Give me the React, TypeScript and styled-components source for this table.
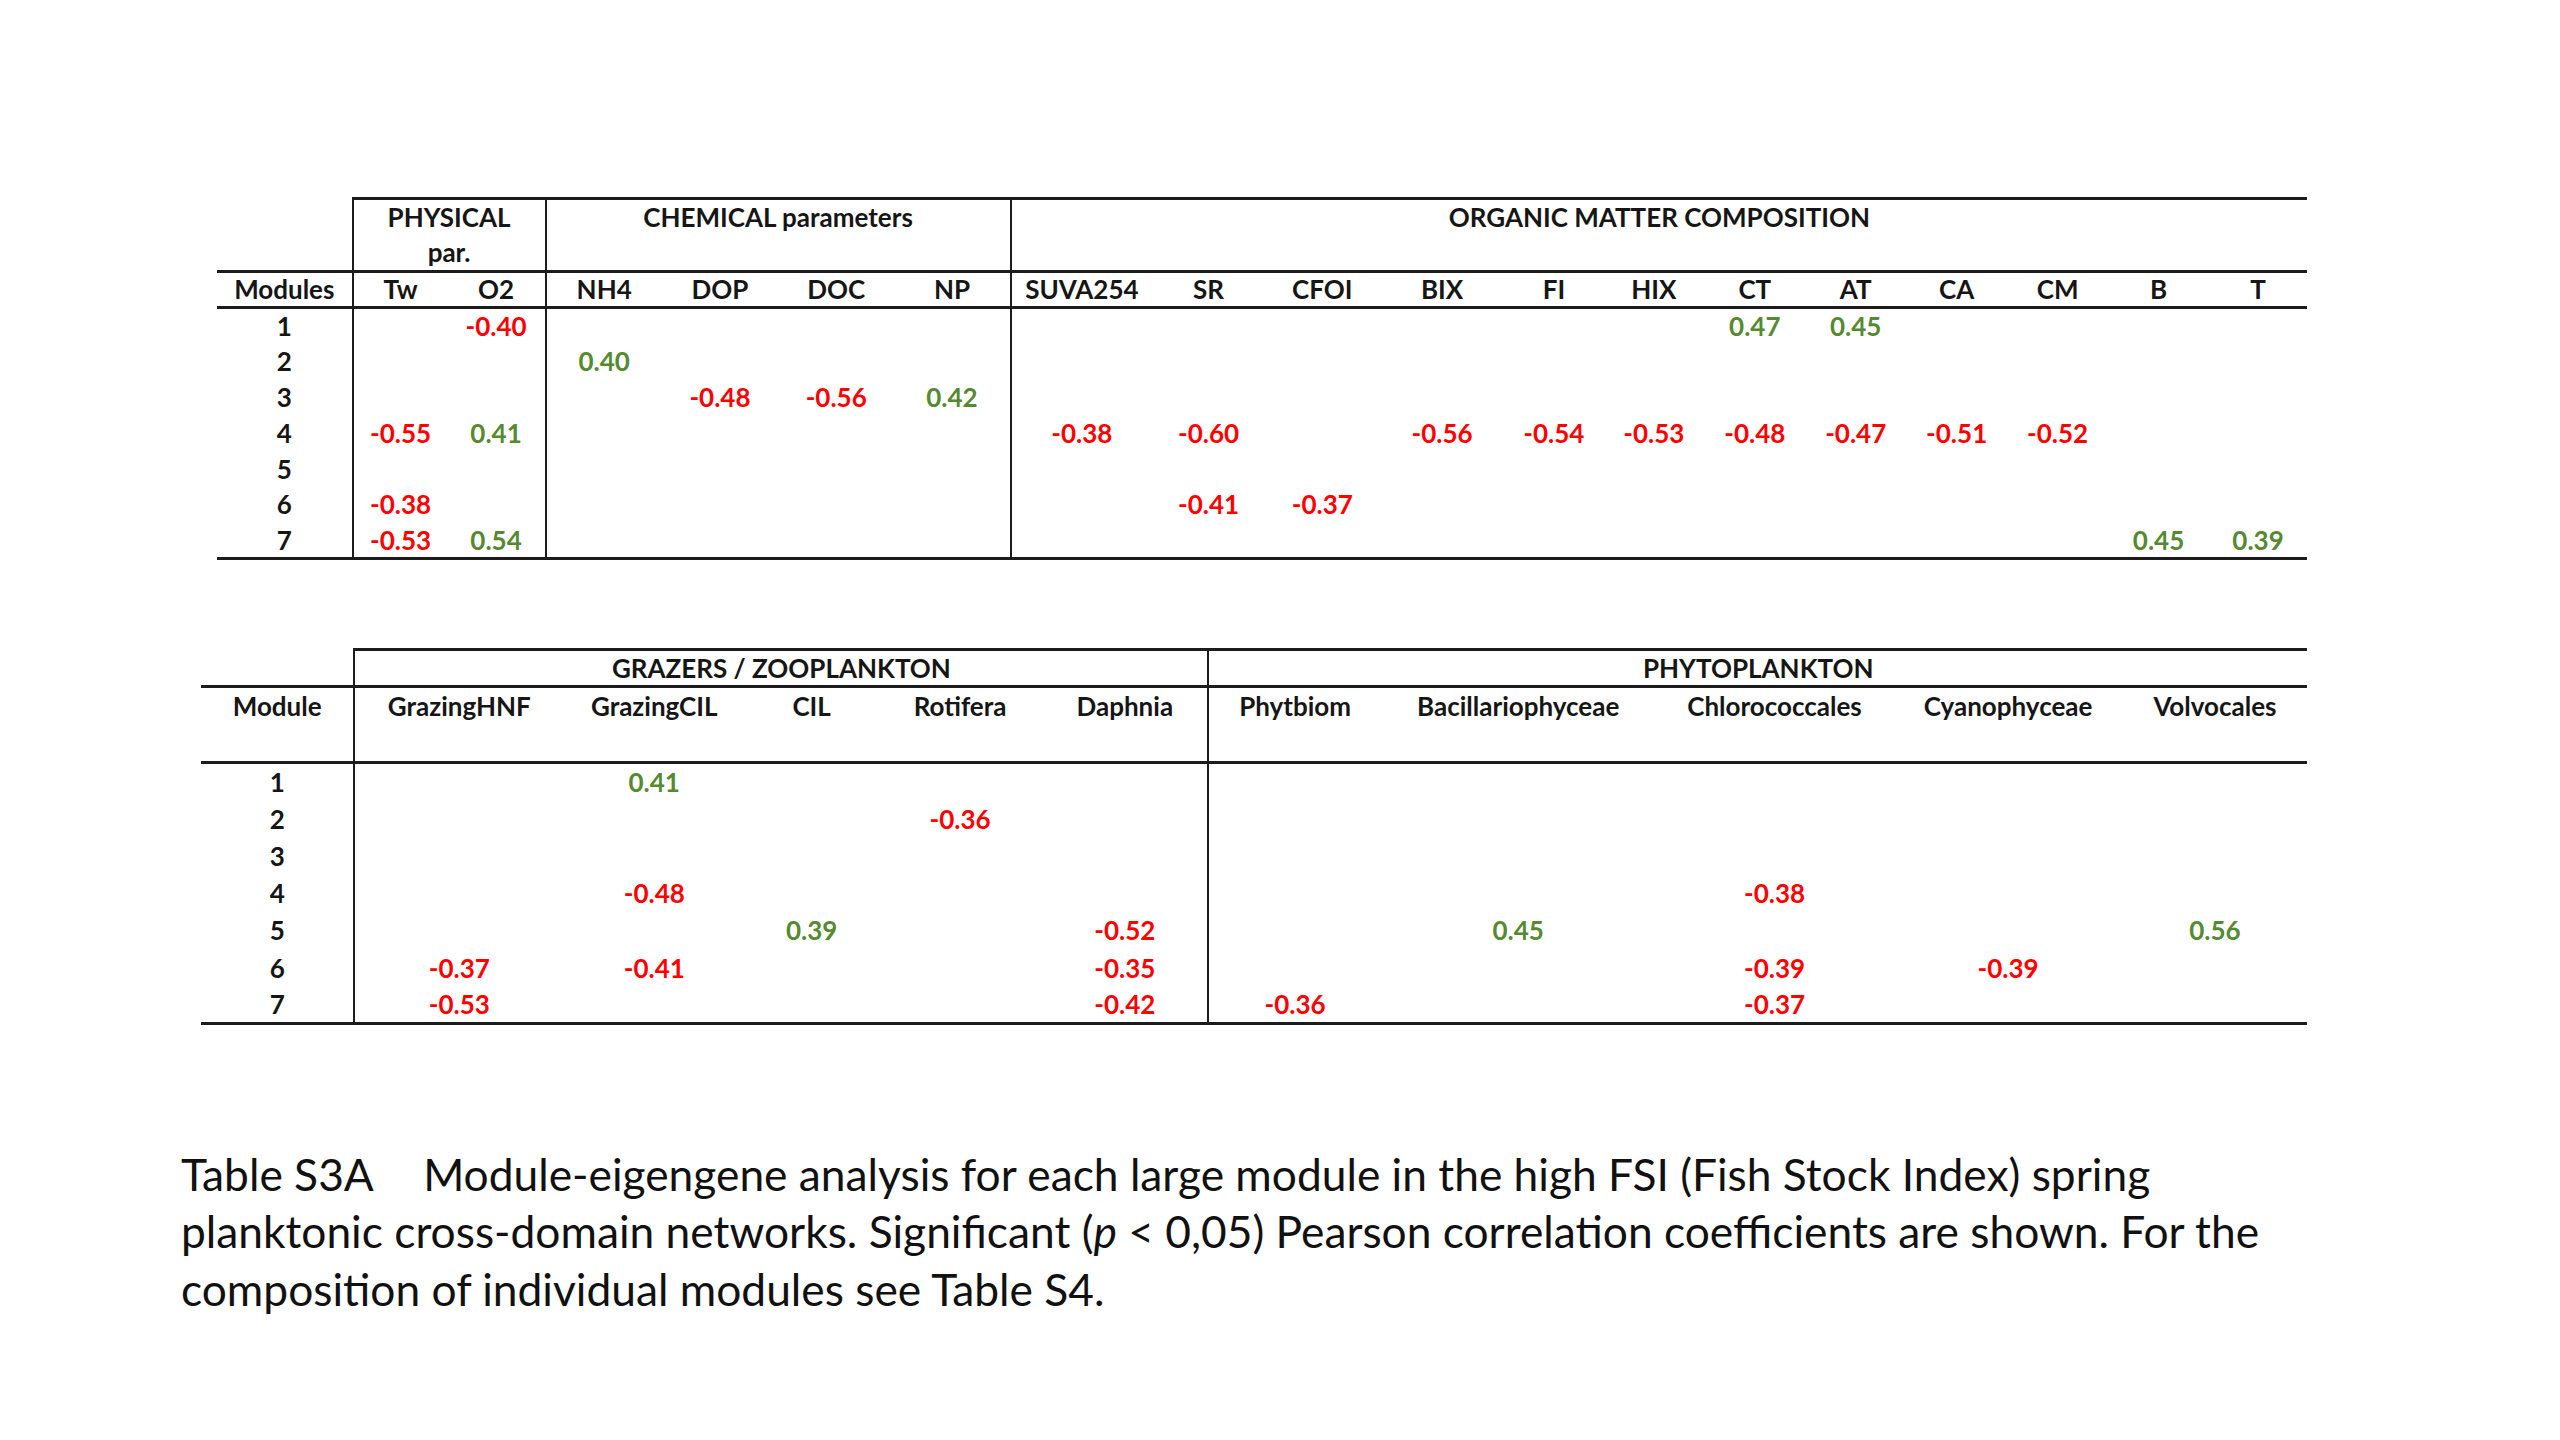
import React from "react";
import styled, { createGlobalStyle } from "styled-components";

const Global = createGlobalStyle`
  html, body { margin: 0; padding: 0; background: #ffffff; }
  body { font-family: Lato, "Open Sans", sans-serif; color: #161616; }
`;

const Page = styled.div`
  width: 2560px;
  height: 1440px;
  box-sizing: border-box;
  padding-top: 197px;
  display: flex;
  flex-direction: column;
  align-items: flex-start;
  overflow: hidden;
  background: #ffffff;
`;

const Table = styled.table<{ $left: number; $top?: number; $width: number }>`
  margin-left: ${(p) => p.$left}px;
  margin-top: ${(p) => p.$top ?? 0}px;
  width: ${(p) => p.$width}px;
  border-collapse: collapse;
  table-layout: fixed;
  font-family: Lato, "Open Sans", sans-serif;
  font-weight: 700;
  font-size: 26px;
  color: #161616;
`;

const Col = styled.col<{ $w: number }>`
  width: ${(p) => p.$w}px;
`;

const Row = styled.tr<{ $h: number; $bottom?: boolean }>`
  height: ${(p) => p.$h}px;
  & > td {
    border-bottom: ${(p) => (p.$bottom ? "3px solid #1c1c1c" : "0")};
  }
`;

const Cell = styled.td<{
  $vl?: boolean;
  $top?: boolean;
  $color?: string;
  $valign?: string;
  $lh?: number;
}>`
  padding: 0;
  text-align: center;
  white-space: nowrap;
  vertical-align: ${(p) => p.$valign ?? "middle"};
  line-height: ${(p) => p.$lh ?? 28}px;
  border-left: ${(p) => (p.$vl ? "2px solid #1c1c1c" : "0")};
  border-top: ${(p) => (p.$top ? "3px solid #1c1c1c" : "0")};
  color: ${(p) => p.$color ?? "#161616"};
`;

const Caption = styled.p<{ $top: number }>`
  margin: ${(p) => p.$top}px 0 0 181px;
  font-family: Lato, "Open Sans", sans-serif;
  font-weight: 400;
  font-size: 44.3px;
  line-height: 57.2px;
  color: #111111;
  white-space: nowrap;
`;

const Tab = styled.span`
  display: inline-block;
  width: 38px;
`;

const RED = "#ff0000";
const GREEN = "#558a30";

const valueColor = (v: string) => (v.startsWith("-") ? RED : GREEN);

type ColDef = { h: string; w: number; vl?: boolean };

const t1First = 137;
const t1Cols: ColDef[] = [
  { h: "Tw", w: 96, vl: true },
  { h: "O2", w: 99 },
  { h: "NH4", w: 117.5, vl: true },
  { h: "DOP", w: 117.5 },
  { h: "DOC", w: 117.5 },
  { h: "NP", w: 117.5 },
  { h: "SUVA254", w: 143, vl: true },
  { h: "SR", w: 114 },
  { h: "CFOI", w: 116 },
  { h: "BIX", w: 126 },
  { h: "FI", w: 100 },
  { h: "HIX", w: 102 },
  { h: "CT", w: 102 },
  { h: "AT", w: 102 },
  { h: "CA", w: 102 },
  { h: "CM", w: 102 },
  { h: "B", w: 102 },
  { h: "T", w: 99 },
];

const t1Rows: Record<string, string>[] = [
  { O2: "-0.40", CT: "0.47", AT: "0.45" },
  { NH4: "0.40" },
  { DOP: "-0.48", DOC: "-0.56", NP: "0.42" },
  {
    Tw: "-0.55",
    O2: "0.41",
    SUVA254: "-0.38",
    SR: "-0.60",
    BIX: "-0.56",
    FI: "-0.54",
    HIX: "-0.53",
    CT: "-0.48",
    AT: "-0.47",
    CA: "-0.51",
    CM: "-0.52",
  },
  {},
  { Tw: "-0.38", SR: "-0.41", CFOI: "-0.37" },
  { Tw: "-0.53", O2: "0.54", B: "0.45", T: "0.39" },
];

const t2First = 155;
const t2Cols: ColDef[] = [
  { h: "GrazingHNF", w: 211, vl: true },
  { h: "GrazingCIL", w: 184 },
  { h: "CIL", w: 134 },
  { h: "Rotifera", w: 166 },
  { h: "Daphnia", w: 168 },
  { h: "Phytbiom", w: 174, vl: true },
  { h: "Bacillariophyceae", w: 278 },
  { h: "Chlorococcales", w: 240 },
  { h: "Cyanophyceae", w: 232 },
  { h: "Volvocales", w: 186 },
];

const t2Rows: Record<string, string>[] = [
  { GrazingCIL: "0.41" },
  { Rotifera: "-0.36" },
  {},
  { GrazingCIL: "-0.48", Chlorococcales: "-0.38" },
  { CIL: "0.39", Daphnia: "-0.52", Bacillariophyceae: "0.45", Volvocales: "0.56" },
  {
    GrazingHNF: "-0.37",
    GrazingCIL: "-0.41",
    Daphnia: "-0.35",
    Chlorococcales: "-0.39",
    Cyanophyceae: "-0.39",
  },
  { GrazingHNF: "-0.53", Daphnia: "-0.42", Phytbiom: "-0.36", Chlorococcales: "-0.37" },
];

const T1_WIDTH = 2090;
const T2_WIDTH = 2106;

const scaleOf = (first: number, cols: ColDef[], total: number) =>
  total / (first + cols.reduce((s, c) => s + c.w, 0));

function ColGroup({ first, cols, total }: { first: number; cols: ColDef[]; total: number }) {
  const s = scaleOf(first, cols, total);
  return (
    <colgroup>
      <Col $w={first * s} />
      {cols.map((c) => (
        <Col key={c.h} $w={c.w * s} />
      ))}
    </colgroup>
  );
}

function DataRows({
  rows,
  cols,
  h,
}: {
  rows: Record<string, string>[];
  cols: ColDef[];
  h: number;
}) {
  return (
    <>
      {rows.map((r, i) => (
        <Row key={i} $h={h} $bottom={i === rows.length - 1}>
          <Cell>{i + 1}</Cell>
          {cols.map((c) => {
            const v = r[c.h] ?? "";
            return (
              <Cell key={c.h} $vl={c.vl} $color={v ? valueColor(v) : undefined}>
                {v}
              </Cell>
            );
          })}
        </Row>
      ))}
    </>
  );
}

function EnvironmentTable() {
  return (
    <Table $left={217} $width={T1_WIDTH}>
      <ColGroup first={t1First} cols={t1Cols} total={T1_WIDTH} />
      <tbody>
        <Row $h={70} $bottom>
          <Cell />
          <Cell colSpan={2} $vl $top $valign="top" $lh={35}>
            PHYSICAL
            <br />
            par.
          </Cell>
          <Cell colSpan={4} $vl $top $valign="top" $lh={35}>
            CHEMICAL parameters
          </Cell>
          <Cell colSpan={12} $vl $top $valign="top" $lh={35}>
            ORGANIC MATTER COMPOSITION
          </Cell>
        </Row>
        <Row $h={35.6} $bottom>
          <Cell>Modules</Cell>
          {t1Cols.map((c) => (
            <Cell key={c.h} $vl={c.vl}>
              {c.h}
            </Cell>
          ))}
        </Row>
        <DataRows rows={t1Rows} cols={t1Cols} h={35.9} />
      </tbody>
    </Table>
  );
}

function PlanktonTable() {
  return (
    <Table $left={201} $top={88.5} $width={T2_WIDTH}>
      <ColGroup first={t2First} cols={t2Cols} total={T2_WIDTH} />
      <tbody>
        <Row $h={36.6} $bottom>
          <Cell />
          <Cell colSpan={5} $vl $top>
            GRAZERS / ZOOPLANKTON
          </Cell>
          <Cell colSpan={5} $vl $top>
            PHYTOPLANKTON
          </Cell>
        </Row>
        <Row $h={76.2} $bottom>
          <Cell $valign="top" $lh={37}>
            Module
          </Cell>
          {t2Cols.map((c) => (
            <Cell key={c.h} $vl={c.vl} $valign="top" $lh={37}>
              {c.h}
            </Cell>
          ))}
        </Row>
        <DataRows rows={t2Rows} cols={t2Cols} h={37.3} />
      </tbody>
    </Table>
  );
}

export default function App() {
  return (
    <>
      <Global />
      <Page>
        <EnvironmentTable />
        <PlanktonTable />
        <Caption $top={120}>
          Table S3A<Tab /> Module-eigengene analysis for each large module in the high FSI (Fish Stock Index) spring
          <br />
          planktonic cross-domain networks. Significant (<i>p</i> &lt; 0,05) Pearson correlation coefficients are shown. For the
          <br />
          composition of individual modules see Table S4.
        </Caption>
      </Page>
    </>
  );
}
